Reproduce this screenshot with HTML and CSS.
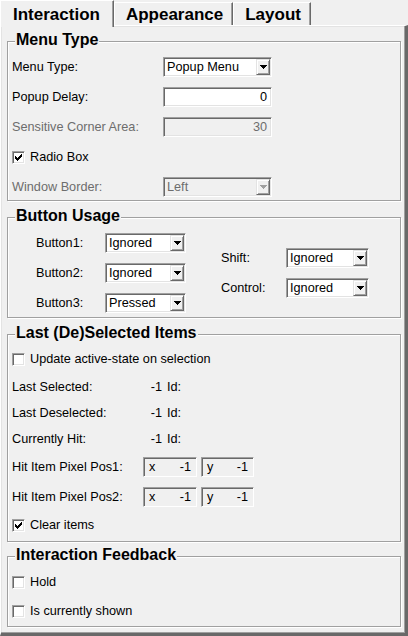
FILE: index.html
```
<!DOCTYPE html>
<html>
<head>
<meta charset="utf-8">
<link rel="stylesheet" href="styles.css">
</head>
<body>
<div class="window">
  <div class="tabs">
    <div class="tab active">Interaction</div>
    <div class="tab">Appearance</div>
    <div class="tab">Layout</div>
  </div>
  <div class="page">
    <div class="group g-menu">
      <div class="title">Menu Type</div>
      <div class="form">
        <div class="row"><span class="label">Menu Type:</span>
          <div class="combo w109"><span class="val">Popup Menu</span><span class="drop"><svg width="7" height="4" viewBox="0 0 7 4"><path d="M0 0h7v1H0zM1 1h5v1H1zM2 2h3v1H2zM3 3h1v1H3z"/></svg></span></div>
        </div>
        <div class="row"><span class="label">Popup Delay:</span>
          <div class="field w109">0</div>
        </div>
        <div class="row"><span class="label dis">Sensitive Corner Area:</span>
          <div class="field w109 disabled">30</div>
        </div>
        <div class="row"><span class="check"><svg width="7" height="7" viewBox="0 0 7 7"><path d="M0 2h1v3H0zM1 3h1v3H1zM2 4h1v3H2zM3 3h1v3H3zM4 2h1v3H4zM5 1h1v3H5zM6 0h1v3H6z"/></svg></span><span>Radio Box</span></div>
        <div class="row"><span class="label dis">Window Border:</span>
          <div class="combo w109 disabled"><span class="val">Left</span><span class="drop"><svg width="7" height="4" viewBox="0 0 7 4"><path d="M0 0h7v1H0zM1 1h5v1H1zM2 2h3v1H2zM3 3h1v1H3z"/></svg></span></div>
        </div>
      </div>
    </div>

    <div class="group g-button">
      <div class="title">Button Usage</div>
      <div class="usage">
        <div class="ucol">
          <div class="row"><span class="blabel">Button1:</span><div class="combo w81"><span class="val">Ignored</span><span class="drop"><svg width="7" height="4" viewBox="0 0 7 4"><path d="M0 0h7v1H0zM1 1h5v1H1zM2 2h3v1H2zM3 3h1v1H3z"/></svg></span></div></div>
          <div class="row"><span class="blabel">Button2:</span><div class="combo w81"><span class="val">Ignored</span><span class="drop"><svg width="7" height="4" viewBox="0 0 7 4"><path d="M0 0h7v1H0zM1 1h5v1H1zM2 2h3v1H2zM3 3h1v1H3z"/></svg></span></div></div>
          <div class="row"><span class="blabel">Button3:</span><div class="combo w81"><span class="val">Pressed</span><span class="drop"><svg width="7" height="4" viewBox="0 0 7 4"><path d="M0 0h7v1H0zM1 1h5v1H1zM2 2h3v1H2zM3 3h1v1H3z"/></svg></span></div></div>
        </div>
        <div class="ucol right">
          <div class="row"><span class="mlabel">Shift:</span><div class="combo w83"><span class="val">Ignored</span><span class="drop"><svg width="7" height="4" viewBox="0 0 7 4"><path d="M0 0h7v1H0zM1 1h5v1H1zM2 2h3v1H2zM3 3h1v1H3z"/></svg></span></div></div>
          <div class="row"><span class="mlabel">Control:</span><div class="combo w83"><span class="val">Ignored</span><span class="drop"><svg width="7" height="4" viewBox="0 0 7 4"><path d="M0 0h7v1H0zM1 1h5v1H1zM2 2h3v1H2zM3 3h1v1H3z"/></svg></span></div></div>
        </div>
      </div>
    </div>

    <div class="group g-sel">
      <div class="title">Last (De)Selected Items</div>
      <div class="sel">
        <div class="crow first"><span class="check"></span><span>Update active-state on selection</span></div>
        <div class="info-list">
          <div class="info"><span class="ilabel">Last Selected:</span><span class="num">-1</span><span class="id">Id:</span></div>
          <div class="info"><span class="ilabel">Last Deselected:</span><span class="num">-1</span><span class="id">Id:</span></div>
          <div class="info"><span class="ilabel">Currently Hit:</span><span class="num">-1</span><span class="id">Id:</span></div>
        </div>
        <div class="pos pos1"><span class="plabel">Hit Item Pixel Pos1:</span><div class="xy wx"><span>x</span><span>-1</span></div><div class="xy wy"><span>y</span><span>-1</span></div></div>
        <div class="pos pos2"><span class="plabel">Hit Item Pixel Pos2:</span><div class="xy wx"><span>x</span><span>-1</span></div><div class="xy wy"><span>y</span><span>-1</span></div></div>
        <div class="crow clear"><span class="check"><svg width="7" height="7" viewBox="0 0 7 7"><path d="M0 2h1v3H0zM1 3h1v3H1zM2 4h1v3H2zM3 3h1v3H3zM4 2h1v3H4zM5 1h1v3H5zM6 0h1v3H6z"/></svg></span><span>Clear items</span></div>
      </div>
    </div>

    <div class="group g-feed">
      <div class="title">Interaction Feedback</div>
      <div class="feed">
        <div class="crow hold"><span class="check"></span><span>Hold</span></div>
        <div class="crow shown"><span class="check"></span><span>Is currently shown</span></div>
      </div>
    </div>
  </div>
</div>
</body>
</html>
```

FILE: styles.css
```
* { box-sizing: border-box; }
html, body { margin: 0; padding: 0; }
body {
  background: #f0f0f0;
  font-family: "Liberation Sans", Arial, sans-serif;
  font-size: 12.7px;
  color: #000;
  width: 408px;
  height: 636px;
  overflow: hidden;
}
.window { width: 408px; height: 636px; }

/* tabs */
.tabs { display: flex; align-items: flex-end; height: 25px; }
.tab {
  height: 23px;
  padding: 2px 9px 0 11px;
  font-weight: bold;
  font-size: 17px;
  line-height: 20px;
  border-top: 1px solid #fff;
  border-left: 1px solid #fff;
  border-right: 1px solid #696969;
  box-shadow: inset -1px 0 0 #a0a0a0;
  white-space: nowrap;
}
.tab.active {
  height: 27px;
  padding: 4px 13px 0 12px;
  margin-bottom: -2px;
  position: relative;
  z-index: 1;
  background: #f0f0f0;
}

/* page */
.page {
  height: 611px;
  border-style: solid;
  border-width: 1px 3px 3px 1px;
  border-color: #fff #696969 #696969 #fff;
  box-shadow: inset -1px -1px 0 #a0a0a0, inset 1px 1px 0 #e3e3e3;
  padding: 0 4px 0 6px;
  display: flex;
  flex-direction: column;
}

/* groups */
.group {
  border: 1px solid #a0a0a0;
  box-shadow: 1px 1px 0 #fff, inset 1px 1px 0 #fff;
  display: flex;
  flex-direction: column;
}
.title {
  align-self: flex-start;
  margin: -11px 0 1px 7px;
  padding: 0 1px;
  background: #f0f0f0;
  font-weight: bold;
  font-size: 16px;
  line-height: 18px;
  white-space: nowrap;
}
.g-menu { margin-top: 15px; padding-bottom: 3px; }
.g-button { margin-top: 16px; padding-bottom: 4px; }
.g-sel { margin-top: 16px; padding-bottom: 7px; }
.g-feed { margin-top: 14px; padding-bottom: 6px; }

.form { display: flex; flex-direction: column; gap: 10px; padding: 7px 0 0 4px; }
.row { display: flex; align-items: center; height: 20px; white-space: nowrap; }
.label { width: 151px; }
.dis { color: #6d6d6d; }

/* sunken controls */
.combo, .field, .check, .xy {
  border: 1px solid;
  border-color: #a0a0a0 #fff #fff #a0a0a0;
  box-shadow: inset 1px 1px 0 #696969, inset -1px -1px 0 #e3e3e3;
}
.combo {
  height: 20px;
  display: flex;
  align-items: center;
  background: #fff;
  padding: 0 1px 0 3px;
}
.combo .val { flex: 1; }
.drop {
  width: 14px;
  height: 16px;
  background: #f0f0f0;
  border: 1px solid;
  border-color: #e3e3e3 #696969 #696969 #e3e3e3;
  box-shadow: inset 1px 1px 0 #fff, inset -1px -1px 0 #a0a0a0;
  display: flex;
  align-items: center;
  justify-content: center;
}
.drop svg { display: block; fill: #000; }
.combo.disabled { background: #f0f0f0; color: #6d6d6d; }
.combo.disabled .drop svg { fill: #a0a0a0; }

.field {
  height: 20px;
  background: #fff;
  text-align: right;
  padding-right: 4px;
  line-height: 18px;
}
.field.disabled { background: #f0f0f0; color: #6d6d6d; }
.w109 { width: 109px; }
.w81 { width: 81px; }
.w83 { width: 83px; }

.check {
  width: 13px;
  height: 13px;
  background: #fff;
  margin-right: 5px;
  flex: none;
  display: flex;
  align-items: center;
  justify-content: center;
}
.check svg { display: block; fill: #000; }

/* button usage */
.usage { display: flex; padding: 7px 0 0 28px; }
.ucol { display: flex; flex-direction: column; gap: 10px; }
.ucol.right { margin: 15px 0 0 35px; }
.blabel { width: 69px; }
.mlabel { width: 65px; }

/* selected items */
.sel { display: flex; flex-direction: column; padding-left: 4px; }
.crow { display: flex; align-items: center; height: 18px; white-space: nowrap; }
.crow.first { margin-top: 7px; }
.info-list { margin-top: 6px; }
.info { display: flex; align-items: center; height: 26px; }
.ilabel { width: 130px; }
.num { width: 20px; text-align: right; }
.id { margin-left: 5px; }
.pos { display: flex; align-items: center; height: 20px; }
.pos1 { margin-top: 5px; }
.pos2 { margin-top: 10px; }
.plabel { width: 131px; }
.xy {
  height: 20px;
  display: flex;
  align-items: center;
  justify-content: space-between;
  padding: 0 5px 0 5px;
  box-shadow: inset 1px 1px 0 #696969;
}
.wx { width: 54px; }
.wy { width: 53px; margin-left: 4px; }
.crow.clear { margin-top: 9px; }

/* feedback */
.feed { display: flex; flex-direction: column; padding-left: 4px; }
.crow.hold { margin-top: 8px; }
.crow.shown { margin-top: 11px; }
```
